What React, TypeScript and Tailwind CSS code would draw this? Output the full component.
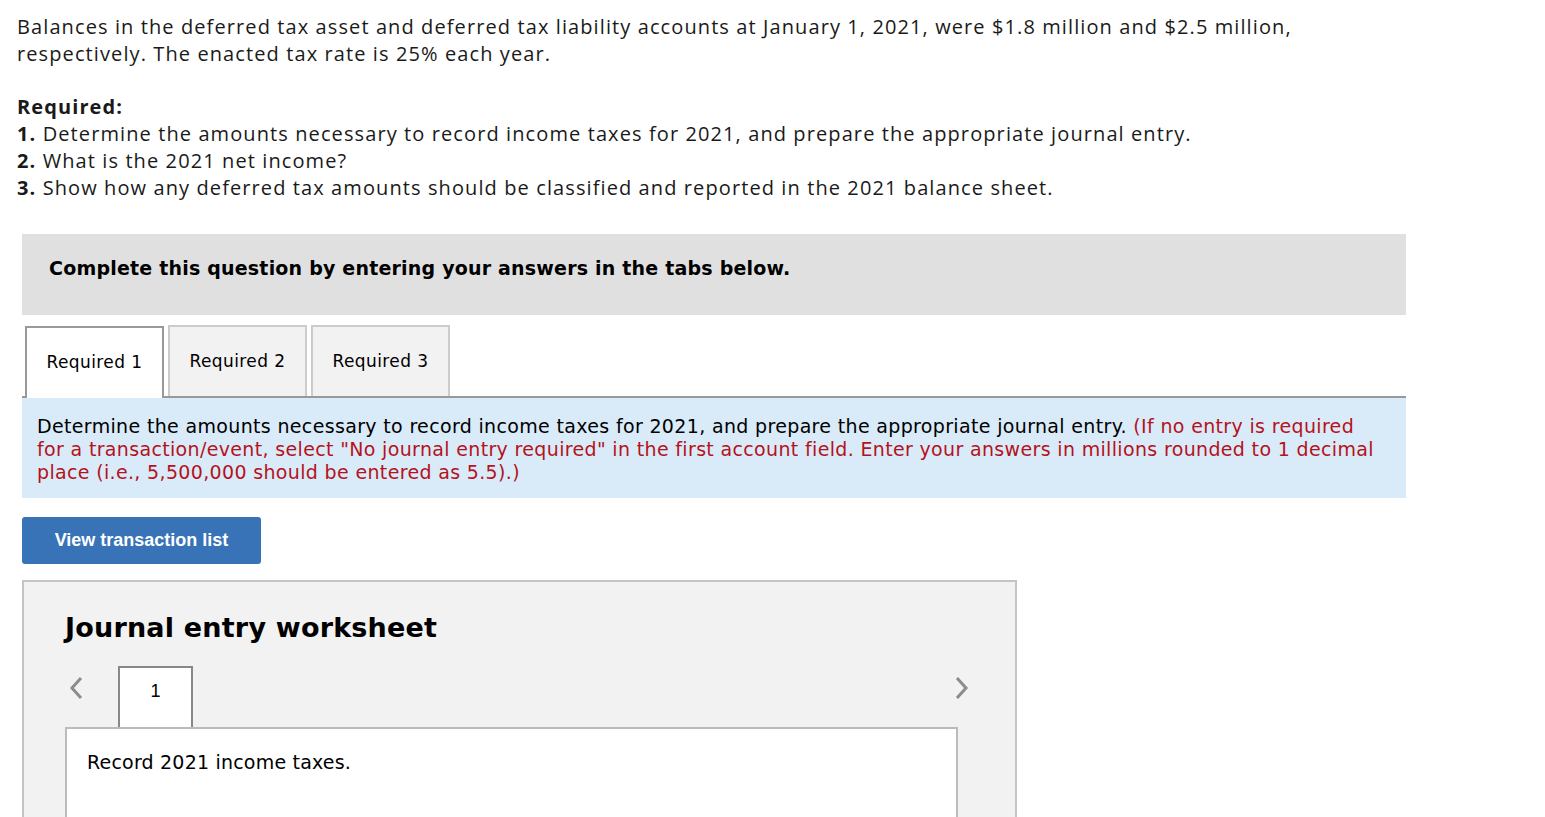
import React from "react";

const proxima = "[font-family:'Open_Sans',Lato,sans-serif]";

function ChevronLeft() {
  return (
    <svg width="16" height="24" viewBox="0 0 16 24" fill="none">
      <path d="M13 2 L4 12 L13 22" stroke="#8c8c8c" strokeWidth="3" />
    </svg>
  );
}
function ChevronRight() {
  return (
    <svg width="16" height="24" viewBox="0 0 16 24" fill="none">
      <path d="M3 2 L12 12 L3 22" stroke="#8c8c8c" strokeWidth="3" />
    </svg>
  );
}

export default function App() {
  return (
    <div className="bg-white text-[#1a1a1a] overflow-hidden h-[817px]">
      <div className={`${proxima} text-[20px] leading-[27px] pl-[17px] pt-[13px] tracking-[1.1px]`}>
        <p>
          Balances in the deferred tax asset and deferred tax liability accounts at January 1, 2021, were $1.8 million and $2.5 million,
          <br />
          respectively. The enacted tax rate is 25% each year.
        </p>
        <p className="mt-[26px] font-bold">Required:</p>
        <p><b>1.</b> Determine the amounts necessary to record income taxes for 2021, and prepare the appropriate journal entry.</p>
        <p><b>2.</b> What is the 2021 net income?</p>
        <p><b>3.</b> Show how any deferred tax amounts should be classified and reported in the 2021 balance sheet.</p>
      </div>

      <div className="ml-[22px] w-[1384px] mt-[33px]">
        <div className="bg-[#e0e0e0] h-[81px] pl-[27px] pt-[20px] [font-family:'DejaVu_Sans',Verdana,sans-serif] font-bold text-[19px] tracking-[0.2px] text-black">
          Complete this question by entering your answers in the tabs below.
        </div>

        <div className="mt-[10px] flex items-end gap-[4px] pl-[3px] border-b-2 border-[#999] [font-family:'DejaVu_Sans',Verdana,sans-serif] text-[17px] tracking-[0.4px] text-black">
          <div className="w-[139px] h-[72px] -mb-[2px] bg-white border-2 border-b-0 border-[#999] flex items-center justify-center pb-[1px]">Required 1</div>
          <div className="w-[139px] h-[71px] bg-[#f2f2f2] border-2 border-b-0 border-[#ccc] flex items-center justify-center">Required 2</div>
          <div className="w-[139px] h-[71px] bg-[#f2f2f2] border-2 border-b-0 border-[#ccc] flex items-center justify-center">Required 3</div>
        </div>

        <div className="bg-[#d9ebf9] h-[100px] pl-[15px] pr-[26px] pt-[17px] [font-family:'DejaVu_Sans',sans-serif] text-[19px] leading-[23px] tracking-[0.34px] text-black">
          Determine the amounts necessary to record income taxes for 2021, and prepare the appropriate journal entry.{" "}
          <span className="text-[#b5121b]">
            (If no entry is required for a transaction/event, select "No journal entry required" in the first account field. Enter your answers in millions rounded to 1 decimal place (i.e., 5,500,000 should be entered as 5.5).)
          </span>
        </div>

        <button className="mt-[19px] w-[239px] h-[47px] rounded-[3px] bg-[#3873b8] text-white font-bold text-[18px] [font-family:'Liberation_Sans',Arial,sans-serif]">
          View transaction list
        </button>

        <div className="mt-[16px] w-[995px] h-[260px] bg-[#f2f2f2] border-2 border-b-0 border-[#c4c4c4] pl-[41px] pr-[57px] pt-[28px]">
          <h2 className="[font-family:'DejaVu_Sans',Verdana,sans-serif] font-bold text-[27px] leading-[36px] tracking-[0.2px] text-black">
            Journal entry worksheet
          </h2>
          <div className="mt-[20px] flex items-start h-[61px] -mr-[12px]">
            <div className="w-[53px] h-full pt-[10px] pl-[3px]">
              <ChevronLeft />
            </div>
            <div className="w-[75px] h-[61px] bg-white border-2 border-b-0 border-[#888] flex justify-center pt-[10px] [font-family:'Liberation_Sans',Arial,sans-serif] text-[18px] text-black">
              1
            </div>
            <div className="flex-1 h-full pt-[10px] flex justify-end">
              <ChevronRight />
            </div>
          </div>
          <div className="bg-white border-2 border-b-0 border-[#bbb] h-[100px] pl-[20px] pt-[19px] [font-family:'DejaVu_Sans',sans-serif] text-[19px] tracking-[0.2px] text-black">
            Record 2021 income taxes.
          </div>
        </div>
      </div>
    </div>
  );
}
